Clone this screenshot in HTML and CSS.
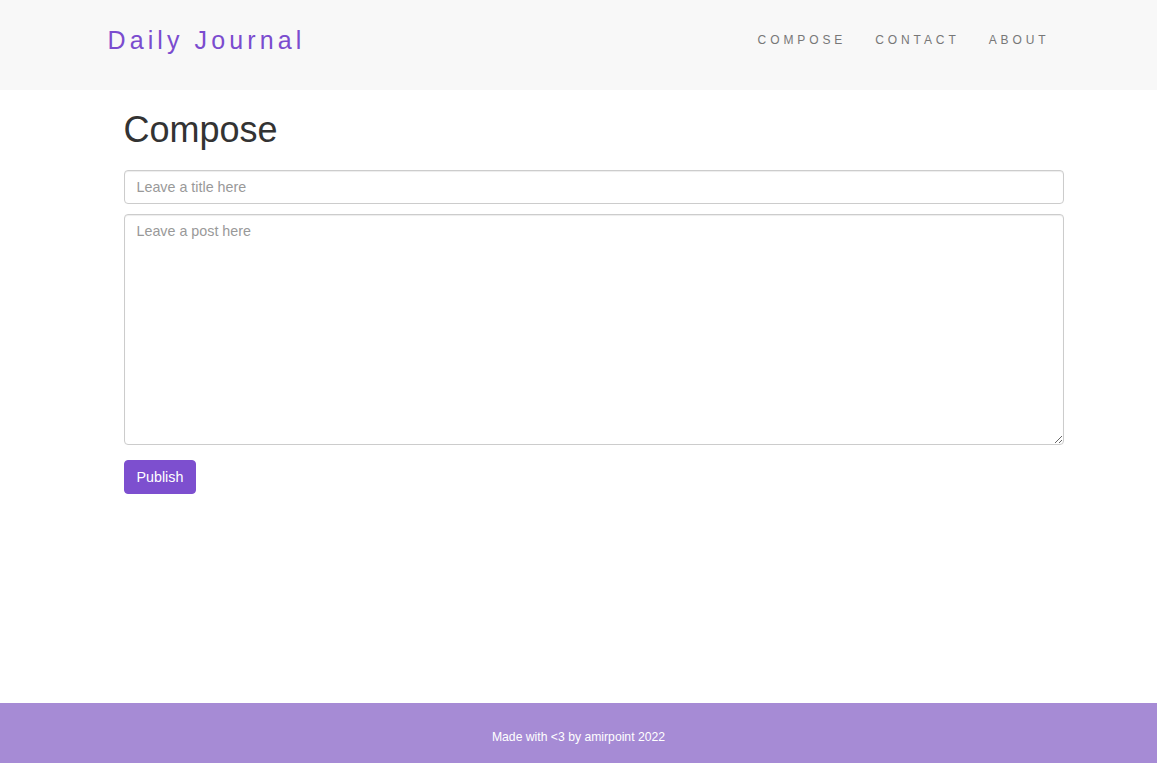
FILE: index.html
```html
<!DOCTYPE html>
<html lang="en">
<head>
<meta charset="utf-8">
<title>Daily Journal</title>
<link rel="stylesheet" href="styles.css">
</head>
<body>
<header class="navbar">
  <div class="nav-inner">
    <a class="brand" href="#">Daily Journal</a>
    <nav class="nav-links">
      <a href="#">COMPOSE</a>
      <a href="#">CONTACT</a>
      <a href="#">ABOUT</a>
    </nav>
  </div>
</header>
<main class="page">
  <h1 class="title">Compose</h1>
  <form class="compose-form">
    <input class="field" type="text" placeholder="Leave a title here">
    <textarea class="field area" placeholder="Leave a post here"></textarea>
    <button class="btn" type="button">Publish</button>
  </form>
</main>
<footer class="footer">
  <p>Made with &lt;3 by amirpoint 2022</p>
</footer>
</body>
</html>
```
FILE: styles.css
```css
* { box-sizing: border-box; }
html, body { margin: 0; padding: 0; }
body {
  font-family: "Liberation Sans", Arial, sans-serif;
  font-size: 14px;
  line-height: 1.42857;
  color: #333;
  background: #fff;
  min-height: 100vh;
  display: flex;
  flex-direction: column;
}
a { text-decoration: none; }

.navbar {
  background: #f8f8f8;
  height: 90px;
  flex: none;
}
.nav-inner {
  width: 940px;
  margin: 0 auto;
  height: 100%;
  display: flex;
  justify-content: space-between;
  align-items: flex-start;
}
.brand {
  font-size: 25px;
  letter-spacing: 4.1px;
  color: #7b4ccf;
  line-height: 30px;
  margin-top: 25px;
  margin-left: -1px;
}
.nav-links {
  display: flex;
  gap: 29px;
  margin-top: 32px;
  margin-right: -1px;
}
.nav-links a {
  font-size: 12px;
  letter-spacing: 3.9px;
  color: #777;
  line-height: 17px;
}

.page {
  flex: 1;
  width: 970px;
  padding-left: 30px;
  margin: 0 auto;
}
.title {
  font-size: 36px;
  font-weight: 500;
  line-height: 1.1;
  margin: 20px 0 10px;
  color: #333;
}
.compose-form {
  display: flex;
  flex-direction: column;
  align-items: flex-start;
  padding-top: 10px;
}
.field {
  display: block;
  width: 940px;
  height: 34px;
  padding: 6px 12px;
  font-family: inherit;
  font-size: 14.3px;
  line-height: 20px;
  color: #555;
  background: #fff;
  border: 1px solid #ccc;
  border-radius: 4px;
  box-shadow: inset 0 1px 1px rgba(0,0,0,.075);
  margin: 0 0 10px;
}
.field::placeholder { color: #999; }
.area {
  height: 231px;
  resize: vertical;
  margin-bottom: 15px;
}
.btn {
  font-family: inherit;
  font-size: 14.3px;
  line-height: 20px;
  padding: 6px 12px;
  color: #fff;
  background: #7d4fcf;
  border: 1px solid #7d4fcf;
  border-radius: 4px;
  cursor: pointer;
}

.footer {
  flex: none;
  height: 60px;
  background: #a68bd5;
  text-align: center;
  padding-top: 26px;
}
.footer p {
  margin: 0;
  font-size: 12.2px;
  line-height: 17px;
  color: #fff;
}
```
